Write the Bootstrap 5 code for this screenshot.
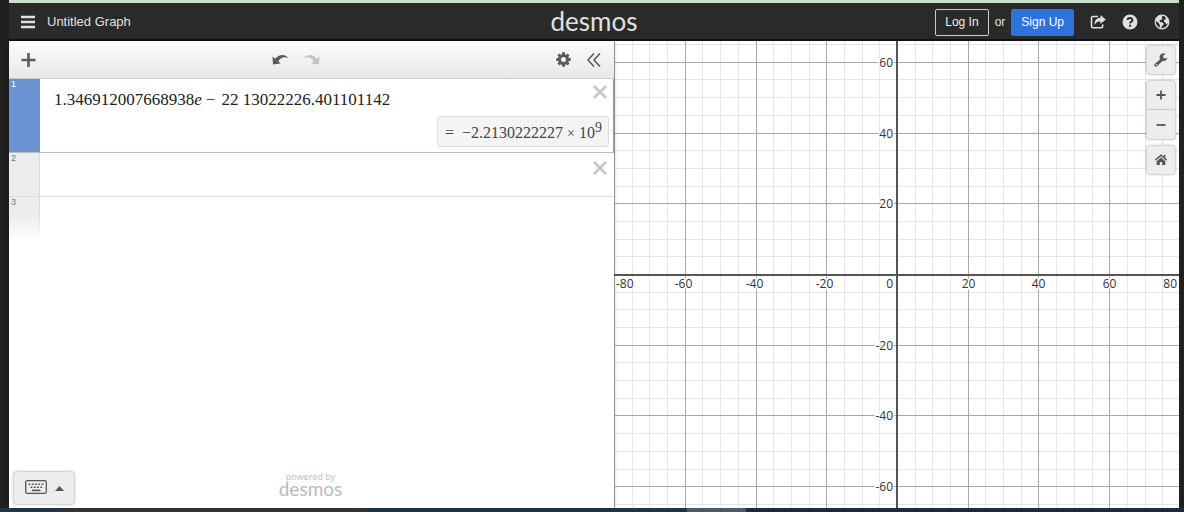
<!DOCTYPE html>
<html lang="en">
<head>
<meta charset="utf-8">
<meta name="viewport" content="width=device-width, initial-scale=1">
<title>Desmos | Untitled Graph</title>
<link href="https://cdn.jsdelivr.net/npm/bootstrap@5.3.0/dist/css/bootstrap.min.css" rel="stylesheet">
<style>
  body { font-family: "Liberation Sans", Arial, sans-serif; font-size: 13px; background: #202020; }
  button { font-family: inherit; }
  svg { display: block; }
  .top-strip { height: 3px; background: #c5e0c4; }
  .bottom-strip { height: 4px; background: linear-gradient(90deg, #22384a 0 61px, #37343a 61px 31%, #203442 31% 58%, #4a5a67 58% 63%, #1c2b40 63%); }
  .window { padding: 0 5px 0 9px; }
  .site-header { display: grid; grid-template-columns: 1fr auto 1fr; align-items: center; height: 38px; padding-top: 2px; background: #2a2a2a; border-bottom: 2px solid #111; color: #e0e0e0; }
  .bare { background: none; border: 0; padding: 0; color: inherit; }
  .brand { font-family: Lato, sans-serif; font-size: 26px; line-height: 30px; padding-bottom: 2px; color: #e0e0e0; }
  .login-area { font-size: 12px; }
  .site-header .btn { font-size: 12px; line-height: 17px; padding: 4px 9px; border-radius: 2px; }
  .btn-login { color: #eee; border-color: #ccc; }
  .btn-signup { color: #fff; background: #2f72dc; border-color: #2f72dc; }
  .or-word { padding: 0 6px; }
  .header-icons { gap: 16px; margin-left: 16px; padding-right: 9px; }
  .panel { flex: 0 0 calc(50% + 20px); background: #fff; box-shadow: 0 0 4px rgba(0,0,0,.3); z-index: 1; }
  .toolbar { height: 38px; padding: 0 13px 0 12px; background: linear-gradient(#fcfcfc, #e8e8e8); border-bottom: 1px solid #ccc; color: #5a5a5a; }
  .history { gap: 14px; }
  .gutter { flex: 0 0 31px; background: #ececec; border-right: 1px solid #ddd; color: #777; font-size: 9px; line-height: 11px; padding-left: 2px; }
  .expr { min-height: 44px; border-bottom: 1px solid #ddd; border-right: 1px solid #fff; }
  .expr.active { min-height: 74px; border-bottom: 1px solid #b4bcc6; border-right: 1px solid #7c9fd0; }
  .expr.active .gutter { background: #6a93d2; border-color: #6a93d2; color: #fff; }
  .expr.next { border: 0; }
  .expr.next .gutter { background: linear-gradient(#ececec 40%, #fff); border-image: linear-gradient(#ddd 40%, #fff) 1; }
  .mathline { font-family: "Liberation Serif", "Times New Roman", serif; font-size: 17px; line-height: 20px; color: #222; outline: 0; }
  .mathfield { padding: 11px 0 0 14px; }
  .op { margin: 0 6px 0 4px; }
  .answer { font-family: "Liberation Serif", "Times New Roman", serif; font-size: 16px; line-height: 20px; height: 31px; padding: 6px 6px 0 7px; margin: 0 4px 5px 0; background: #f4f4f4; border: 1px solid #ddd; border-radius: 3px; color: #444; }
  .answer sup { font-size: 14px; line-height: 0; top: -6px; }
  .answer .times { font-size: 14px; }
  .close-btn { color: #c6c6c6; padding: 6px 6px 0 0; }
  .panel-foot { display: grid; grid-template-columns: 1fr auto 1fr; align-items: end; padding: 0 6px 3px 4px; }
  .pad { background: #ededed; border: 1px solid #d4d4d4; color: #555; box-shadow: 0 0 3px rgba(0,0,0,.15); border-radius: 4px; }
  .pad-keys { width: 62px; height: 34px; padding: 0 0 3px; }
  .powered { font-family: "Open Sans", sans-serif; font-size: 9px; line-height: 11px; color: #bbb; padding-bottom: 9px; }
  .powered .mark-name { font-family: Lato, sans-serif; font-size: 19px; line-height: 14px; color: #bbb; }
  .graph { background: #fff; min-width: 0; }
  .graph text { font-family: "Open Sans", sans-serif; font-size: 12px; fill: #333; stroke: #fff; stroke-width: 3px; paint-order: stroke; }
  .graph-tools { top: 4px; right: 3px; gap: 5px; }
  .graph-tools .pad { width: 30px; height: 30px; padding: 0; display: grid; place-items: center; }
  .graph-tools .zoom-in { border-radius: 4px 4px 0 0; }
  .graph-tools .zoom-out { border-radius: 0 0 4px 4px; border-top: 0; }
</style>
</head>
<body class="vh-100 d-flex flex-column overflow-hidden">
<div class="window d-flex flex-column flex-grow-1">
  <div class="top-strip"></div>
  <header class="site-header">
    <div class="d-flex align-items-center">
      <button class="bare ms-2 ps-1" aria-label="Open menu"><svg width="14" height="14" viewBox="0 0 14 14" fill="none" stroke="currentColor" stroke-width="2.4"><path d="M0 2H14M0 7H14M0 12H14"/></svg></button>
      <span class="ms-2 ps-1">Untitled Graph</span>
    </div>
    <a class="brand text-decoration-none" href="#">desmos</a>
    <div class="login-area d-flex align-items-center justify-content-end">
      <button class="btn btn-login">Log In</button><span class="or-word">or</span><button class="btn btn-signup">Sign Up</button>
      <div class="header-icons d-flex align-items-center">
        <button class="bare" aria-label="Share"><svg width="16" height="16" viewBox="0 0 16 16"><path d="M8 2.5H3.2Q1.5 2.5 1.5 4.200V12Q1.500 13.700 3.200 13.700H11Q12.700 13.700 12.700 12V10.500" fill="none" stroke="currentColor" stroke-width="1.6"/><path d="M10.500 1L15.700 5.600L10.500 10V7.500C7.500 7.200 5.800 8.400 4.500 11C4.300 6.500 6.500 3.800 10.500 3.700Z" fill="currentColor"/></svg></button>
        <button class="bare" aria-label="Help"><svg width="16" height="16" viewBox="0 0 16 16"><circle cx="8" cy="8" r="7.500" fill="currentColor"/><path d="M5.600 6.100C5.600 3.300 10.500 3.300 10.400 6.100C10.300 7.700 8.100 7.700 8.100 9.500" fill="none" stroke="#2a2a2a" stroke-width="1.900"/><rect x="7.100" y="10.700" width="2" height="2" fill="#2a2a2a"/></svg></button>
        <button class="bare" aria-label="Language"><svg width="16" height="16" viewBox="0 0 16 16"><circle cx="8" cy="8" r="6.800" fill="none" stroke="currentColor" stroke-width="1.300"/><path d="M2 4.500L5 1.800L8.500 2L7.500 3.500L8.700 4.500L7 6L5.500 6.500L6 8L8.500 8.500L10 10L8 12L7.300 14.500L5.800 13L5.500 10.300L3.500 8L1.700 7ZM10.500 2.300L14 5V9L12.500 10.500L11.300 8.500L9.800 7.500L10.500 5.500L12 4.800Z" fill="currentColor"/></svg></button>
      </div>
    </div>
  </header>
  <main class="d-flex flex-grow-1">
    <section class="panel d-flex flex-column" aria-label="Expressions">
      <div class="toolbar d-flex align-items-center justify-content-between">
        <button class="bare" aria-label="Add item"><svg width="15" height="14" viewBox="0 0 15 14" stroke="currentColor" stroke-width="2.600"><path d="M7.500 0V14M.500 7H14.500"/></svg></button>
        <div class="history d-flex">
          <button class="bare" aria-label="Undo"><svg width="17" height="12" viewBox="0 0 16 12"><path d="M0 2.500L2.800 4.800C6 0 12.500 -.500 16 4C12 2.300 8.500 3 5.800 7L8 9.500L.500 10.500Z" fill="currentColor"/></svg></button>
          <button class="bare" aria-label="Redo"><svg width="17" height="12" viewBox="0 0 16 12"><path d="M16 2.500L13.200 4.800C10 0 3.500 -.500 0 4C4 2.300 7.500 3 10.200 7L8 9.500L15.500 10.500Z" fill="#c4c4c4"/></svg></button>
        </div>
        <div class="d-flex align-items-center gap-3">
          <button class="bare" aria-label="Edit list"><svg width="15" height="15" viewBox="-7.500 -7.500 15 15"><circle r="4" fill="none" stroke="currentColor" stroke-width="3"/><path d="M0 -7.200V-4.500M0 7.200V4.500M-7.200 0H-4.500M7.200 0H4.500M-5.100 -5.100L-3.500 -3.500M5.100 5.100L3.500 3.500M-5.100 5.100L-3.500 3.500M5.100 -5.100L3.500 -3.500" stroke="currentColor" stroke-width="2.800"/></svg></button>
          <button class="bare" aria-label="Hide list"><svg width="14" height="14" viewBox="0 0 14 14" fill="none" stroke="currentColor" stroke-width="1.600"><path d="M7 .500L1 7L7 13.500M13 .500L7 7L13 13.500"/></svg></button>
        </div>
      </div>

      <div class="expr active d-flex">
        <div class="gutter">1</div>
        <div class="d-flex flex-column justify-content-between flex-grow-1">
          <div class="d-flex justify-content-between align-items-start">
            <div class="mathfield"><div class="mathline text-nowrap" role="textbox" aria-label="Expression 1" contenteditable="true" spellcheck="false">1.346912007668938<i>e</i><span class="op">−</span>22 13022226.401101142</div></div>
            <button class="bare close-btn" aria-label="Delete expression 1"><svg width="14" height="14" viewBox="0 0 14 14" stroke="currentColor" stroke-width="2.600"><path d="M1 1L13 13M13 1L1 13"/></svg></button>
          </div>
          <div class="answer align-self-end text-nowrap"><span class="me-1">=</span> −2.2130222227 <span class="times">×</span> 10<sup>9</sup></div>
        </div>
      </div>
      <div class="expr d-flex">
        <div class="gutter">2</div>
        <input class="bare mathline flex-grow-1 ps-3" aria-label="Expression 2">
        <button class="bare close-btn align-self-start pt-2" aria-label="Delete expression 2"><svg width="14" height="14" viewBox="0 0 14 14" stroke="currentColor" stroke-width="2.600"><path d="M1 1L13 13M13 1L1 13"/></svg></button>
      </div>
      <div class="expr next d-flex"><div class="gutter">3</div></div>

      <div class="panel-foot mt-auto">
        <button class="pad pad-keys d-flex align-items-center justify-content-center gap-2" aria-label="Show keypad">
          <svg width="22" height="14" viewBox="0 0 22 14" fill="none" stroke="currentColor"><rect x=".700" y=".700" width="20.600" height="12.600" rx="1.500" stroke-width="1.300"/><path d="M3.500 4.300H19" stroke-width="1.600" stroke-dasharray="1.800 1.500"/><path d="M5.500 7.300H17.500" stroke-width="1.600" stroke-dasharray="1.800 1.500"/><path d="M7 10.400H15.500" stroke-width="1.600"/></svg>
          <svg class="mt-1" width="9" height="5" viewBox="0 0 9 5"><path d="M0 5L4.500 0L9 5Z" fill="currentColor"/></svg>
        </button>
        <div class="powered text-center">powered by<div class="mark-name">desmos</div></div>
      </div>
    </section>

    <section class="graph flex-grow-1 position-relative overflow-hidden" aria-label="Graph">
      <svg id="plane" class="position-absolute w-100 h-100"></svg>
      <div class="graph-tools position-absolute d-flex flex-column">
        <button class="pad" aria-label="Graph settings"><svg width="14" height="14" viewBox="0 0 14 14"><path d="M1.800 12.200L8 6.500" stroke="currentColor" stroke-width="3" stroke-linecap="round"/><path d="M11.500 .800A3.900 3.900 0 1 0 13.300 5L10.600 5.600L9 4.200L9.400 2.400Z" fill="currentColor"/><circle cx="2.300" cy="11.700" r=".700" fill="#ededed"/></svg></button>
        <div>
          <button class="pad zoom-in" aria-label="Zoom in"><svg width="10" height="10" viewBox="0 0 10 10" stroke="currentColor" stroke-width="1.800"><path d="M5 .500V9.500M.500 5H9.500"/></svg></button>
          <button class="pad zoom-out" aria-label="Zoom out"><svg width="10" height="10" viewBox="0 0 10 10" stroke="currentColor" stroke-width="1.800"><path d="M.500 5H9.500"/></svg></button>
        </div>
        <button class="pad" aria-label="Default view"><svg width="12" height="12" viewBox="0 0 12 12"><path d="M.300 6.200L6 1.200L11.700 6.200" fill="none" stroke="currentColor" stroke-width="1.500"/><path d="M8.700 .800H10.300V4.500L8.700 3ZM6 3.500L10.300 7.200V11H7.200V8H4.800V11H1.700V7.200Z" fill="currentColor"/></svg></button>
      </div>
    </section>
  </main>
</div>
<div class="bottom-strip"></div>
<script src="https://cdn.jsdelivr.net/npm/bootstrap@5.3.0/dist/js/bootstrap.bundle.min.js"></script>
<script>
  // Draws the grid around the centre of the graph paper: just under 16 squares on each side of the y axis.
  const plane = document.getElementById('plane');
  function draw() {
    const w = plane.clientWidth, h = plane.clientHeight;
    const cx = Math.round(w / 2), cy = Math.floor(h / 2), step = w / 31.95;
    let minor = '', major = '', labels = '';
    const text = (x, y, anchor, n) => `<text x="${x}" y="${y}" text-anchor="${anchor}">${n}</text>`;
    for (let i = -16; i <= 16; i++) {
      const x = Math.round(cx + i * step) + .5, y = Math.round(cy - i * step) + .5;
      const seg = `M${x} 0V${h}M0 ${y}H${w}`;
      if (i % 4) { minor += seg; continue; }
      major += seg;
      if (!i) continue;
      const n = i * 5;
      if (i === -16) labels += text(2, cy + 14, 'start', n);
      else if (i === 16) labels += text(w - 2, cy + 14, 'end', n);
      else labels += text(x - (i < 0 ? 2 : 0), cy + 14, 'middle', n);
      if (y > 0 && y < h) labels += text(cx - 4, y + 4, 'end', n);
    }
    labels += text(cx - 4, cy + 14, 'end', 0);
    plane.innerHTML = `<path d="${minor}" stroke="#e6e6e6"/><path d="${major}" stroke="#a8a8a8"/>` + labels +
      `<path d="M${cx} 0V${h}M0 ${cy + 1}H${w}" stroke="#555" stroke-width="2"/>`;
  }
  draw();
  addEventListener('resize', draw);
</script>
</body>
</html>
